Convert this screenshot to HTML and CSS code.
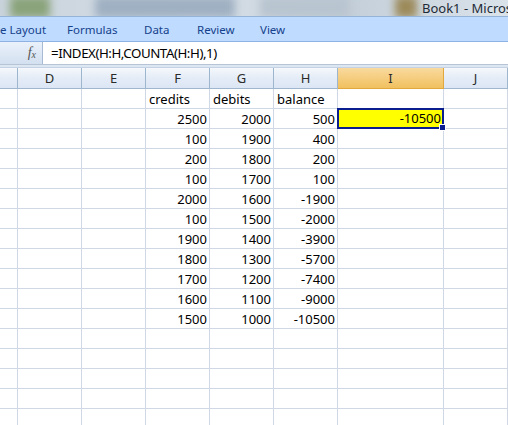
FILE: index.html
```html
<!DOCTYPE html>
<html lang="en">
<head>
  <meta charset="UTF-8">
  <title>Book1 - Microsoft Excel</title>
  <link rel="stylesheet" href="styles.css">
</head>
<body>
  <div class="titlebar">
    <div class="blur b1"></div>
    <div class="blur b2"></div>
    <div class="blur b3"></div>
    <div class="blur b4"></div>
    <span class="apptitle">Book1 - Microsoft Excel</span>
  </div>
  <div class="tabs">
    <span class="tab t-layout">e Layout</span>
    <span class="tab t-formulas">Formulas</span>
    <span class="tab t-data">Data</span>
    <span class="tab t-review">Review</span>
    <span class="tab t-view">View</span>
  </div>
  <div class="formulabar">
    <div class="fxbox"><span class="fx">f<sub>x</sub></span></div>
    <div class="formula">=INDEX(H:H,COUNTA(H:H),1)</div>
  </div>
  <div class="gap"></div>
  <div class="sheet" id="sheet">
    <div class="hd corner"></div>
    <div class="hd">D</div>
    <div class="hd">E</div>
    <div class="hd">F</div>
    <div class="hd">G</div>
    <div class="hd">H</div>
    <div class="hd active">I</div>
    <div class="hd">J</div>
  </div>
  <script>
  // rows of the sheet: F, G, H values
  var data = [
    ['credits','debits','balance'],
    [2500,2000,500],
    [100,1900,400],
    [200,1800,200],
    [100,1700,100],
    [2000,1600,-1900],
    [100,1500,-2000],
    [1900,1400,-3900],
    [1800,1300,-5700],
    [1700,1200,-7400],
    [1600,1100,-9000],
    [1500,1000,-10500]
  ];
  var sheet = document.getElementById('sheet');
  function cell(text, cls){
    var d = document.createElement('div');
    d.className = 'c' + (cls ? ' ' + cls : '');
    d.textContent = text;
    sheet.appendChild(d);
  }
  for (var r = 0; r < 17; r++){
    cell('', 'rh');
    cell('');
    cell('');
    var row = data[r] || ['','',''];
    row.forEach(function(v){
      cell(v, typeof v === 'number' ? 'num' : '');
    });
    if (r === 1) cell(-10500, 'num sel');
    else cell('');
    cell('');
  }
  </script>
</body>
</html>
```

FILE: styles.css
```css
body{
  margin: 0;
  width: 508px;
  height: 425px;
  overflow: hidden;
  background: #fff;
  font-family: "Noto Sans", "DejaVu Sans", sans-serif;
}

/* blurred window title */
.titlebar{
  position: relative;
  height: 16px;
  overflow: hidden;
  background: linear-gradient(to right, #c9d3dc, #d7dfe7 40%, #c5d0da 70%, #dbe3ea);
}
.blur{
  position: absolute;
  top: -4px;
  height: 22px;
  filter: blur(4px);
}
.b1{ left: 10px; width: 40px; background: #8aa37a; }
.b2{ left: 95px; width: 140px; background: #9fb0c2; }
.b3{ left: 260px; width: 90px; background: #b8c4cf; }
.b4{ left: 395px; width: 22px; background: #9c8a5a; }
.apptitle{
  position: absolute;
  left: 422px;
  top: 0;
  font-size: 13px;
  line-height: 16px;
  color: #1e2a36;
  white-space: nowrap;
}

/* ribbon tabs */
.tabs{
  display: flex;
  height: 24px;
  align-items: center;
  background: #bfdbff;
  border-top: 1px solid #95b3d7;
  border-bottom: 1px solid #8db2e3;
  white-space: nowrap;
  font-size: 11.5px;
  color: #15428b;
}
.tab{ display: block; flex: none; }
.t-layout{ width: 67px; }
.t-formulas{ width: 77px; }
.t-data{ width: 53px; }
.t-review{ width: 63px; }

/* formula bar */
.formulabar{
  display: flex;
  height: 22px;
  border-bottom: 1px solid #b6c4d6;
}
.fxbox{
  width: 43px;
  border-right: 1px solid #a7bad3;
  background: linear-gradient(#eaf1fa, #d3e0f0);
  display: flex;
  justify-content: flex-end;
  align-items: center;
  padding-right: 6px;
  box-sizing: border-box;
}
.fx{
  font-family: "Liberation Serif", serif;
  font-style: italic;
  font-size: 14px;
  color: #555;
}
.fx sub{ font-size: 10px; vertical-align: -1px; }
.formula{
  padding-left: 8px;
  font-size: 13.3px;
  letter-spacing: -0.45px;
  line-height: 22px;
  color: #000;
}
.gap{
  height: 2px;
  background: #dde7f3;
  border-bottom: 1px solid #c5d2e2;
}

/* grid */
.sheet{
  display: grid;
  grid-template-columns: 18px 64px 64px 64px 64px 64px 106px 64px;
  grid-auto-rows: 20px;
  grid-template-rows: 21px;
}
.hd{
  box-sizing: border-box;
  border-right: 1px solid #9eb6ce;
  border-bottom: 1px solid #9eb6ce;
  background: linear-gradient(#f5f8fc, #e4ecf7 50%, #dce6f4);
  text-align: center;
  font-size: 13px;
  line-height: 20px;
  color: #2a2a2a;
}
.hd.active{
  background: linear-gradient(#f9d99f, #f1c15f);
  border-right-color: #e2a83d;
  border-bottom-color: #e2a83d;
}
.c{
  box-sizing: border-box;
  border-right: 1px solid #d0d7e5;
  border-bottom: 1px solid #d0d7e5;
  font-size: 13px;
  line-height: 21px;
  padding: 0 2px 0 3px;
  color: #000;
  white-space: nowrap;
  overflow: hidden;
}
.c.rh{
  background: #fff;
}
.num{ text-align: right; }
.c.sel{
  position: relative;
  overflow: visible;
  background: #ffff00;
  border: 2px solid #0b1e8f;
  margin: -1px 0 0 -1px;
  line-height: 17px;
  padding-right: 1px;
}
.c.sel::after{
  content: "";
  position: absolute;
  right: -4px;
  bottom: -4px;
  width: 5px;
  height: 5px;
  background: #0b1e8f;
  border: 1px solid #fff;
}
```
